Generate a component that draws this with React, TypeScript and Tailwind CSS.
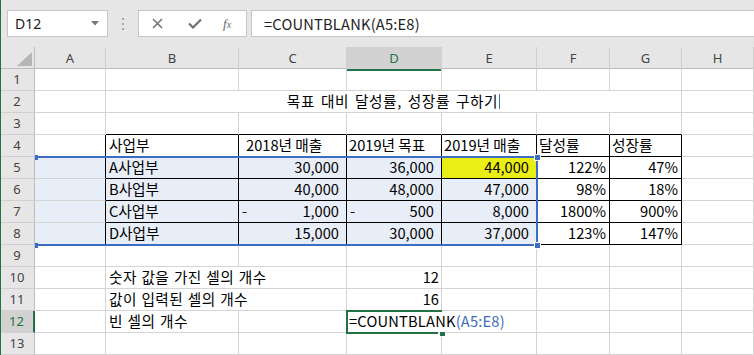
import React from "react";

const COLS = ["A", "B", "C", "D", "E", "F", "G", "H"];
const GRID = "grid grid-cols-[35px_71px_133px_108px_95px_95px_73px_72px_72px]";
const SEL = "bg-[#e8eef8]";

type Cell = {
  t?: React.ReactNode;
  span?: number;
  bg?: string;
};

// table B4:G8 gets black borders
function borderCls(r: number, c: number) {
  const right = r >= 4 && r <= 8 && c >= 1 && c <= 7 ? "border-r-black" : "border-r-[#d4d4d4]";
  const bottom = r >= 3 && r <= 8 && c >= 2 && c <= 7 ? "border-b-black" : "border-b-[#d4d4d4]";
  return `${right} ${bottom}`;
}

const acc = (v: string, dash = false) => (
  <div className="flex justify-between pl-[3px] pr-[7px]">
    <span>{dash ? "-" : ""}</span>
    <span>{v}</span>
  </div>
);
const num = (v: string, pr = "pr-[3px]") => <div className={`text-right ${pr}`}>{v}</div>;
const txt = (v: string, pl = "pl-[3px]") => <div className={pl}>{v}</div>;
const kor = (v: string) => (
  <div className="pl-[3px] whitespace-nowrap tracking-[0.4px] [word-spacing:1px]">{v}</div>
);

const dataRows: { b: string; c: string; d: string; e: string; f: string; g: string; dash?: boolean }[] = [
  { b: "A사업부", c: "30,000", d: "36,000", e: "44,000", f: "122%", g: "47%" },
  { b: "B사업부", c: "40,000", d: "48,000", e: "47,000", f: "98%", g: "18%" },
  { b: "C사업부", c: "1,000", d: "500", e: "8,000", f: "1800%", g: "900%", dash: true },
  { b: "D사업부", c: "15,000", d: "30,000", e: "37,000", f: "123%", g: "147%" },
];

function buildRow(r: number): Cell[] {
  const empty = (n: number) => Array.from({ length: n }, () => ({} as Cell));
  if (r === 2)
    return [
      {},
      {
        span: 6,
        t: (
          <div className="text-center tracking-[0.6px] [word-spacing:2px]">
            목표 대비 달성률, 성장률 구하기
            <span className="inline-block w-px h-[15px] bg-[#3b6ec2] ml-[1px] align-[-2px]" />
          </div>
        ),
      },
      {},
    ];
  if (r === 4)
    return [
      {},
      { t: txt("사업부") },
      { t: txt("2018년 매출", "pl-[7px]") },
      { t: txt("2019년 목표", "pl-[2px]") },
      { t: txt("2019년 매출", "pl-[2px]") },
      { t: txt("달성률", "pl-[2px]") },
      { t: txt("성장률", "pl-[2px]") },
      {},
    ];
  if (r >= 5 && r <= 8) {
    const d = dataRows[r - 5];
    return [
      { bg: SEL },
      { bg: SEL, t: txt(d.b) },
      { bg: SEL, t: acc(d.c, d.dash) },
      { bg: SEL, t: acc(d.d, d.dash) },
      { bg: r === 5 ? "bg-[#e9ee14]" : SEL, t: acc(d.e) },
      { t: num(d.f) },
      { t: num(d.g) },
      {},
    ];
  }
  if (r === 10 || r === 11)
    return [
      {},
      { span: 2, t: kor(r === 10 ? "숫자 값을 가진 셀의 개수" : "값이 입력된 셀의 개수") },
      { t: num(r === 10 ? "12" : "16", "pr-[2px]") },
      ...empty(4),
    ];
  if (r === 12)
    return [
      {},
      { t: kor("빈 셀의 개수") },
      {},
      {
        span: 2,
        t: (
          <div className="pl-[2px] whitespace-nowrap tracking-[0.2px]">
            =COUNTBLANK<span className="text-[#3b6ec2]">(A5:E8)</span>
          </div>
        ),
      },
      ...empty(3),
    ];
  return empty(8);
}

function FxBar() {
  return (
    <div className="h-[47px] bg-[#e6e6e6] flex items-start pt-[10px] font-['Noto_Sans',sans-serif]">
      <div className="ml-[6px] w-[101px] h-[27px] bg-white border border-[#c6c6c6] flex items-center justify-between pl-[7px] pr-[8px]">
        <span className="text-[14px] text-[#222]">D12</span>
        <svg width="8" height="5" viewBox="0 0 8 5">
          <path d="M0 0h8L4 4.5z" fill="#777" />
        </svg>
      </div>
      <div className="ml-[14px] mt-[8px] flex flex-col gap-[3px]">
        <div className="w-[2px] h-[2px] bg-[#a8a8a8]" />
        <div className="w-[2px] h-[2px] bg-[#a8a8a8]" />
        <div className="w-[2px] h-[2px] bg-[#a8a8a8]" />
      </div>
      <div className="ml-[14px] w-[109px] h-[27px] bg-white border border-[#c6c6c6] flex items-center">
        <svg className="ml-[13px]" width="11" height="11" viewBox="0 0 11 11">
          <path d="M1 1l9 9M10 1l-9 9" stroke="#707070" strokeWidth="1.5" />
        </svg>
        <svg className="ml-[25px]" width="14" height="11" viewBox="0 0 14 11">
          <path d="M1 5.5l4 4L13 1.5" stroke="#707070" strokeWidth="2.2" fill="none" />
        </svg>
        <span className="ml-[21px] text-[13px] italic text-[#666] font-['Liberation_Serif',serif]">
          f<span className="text-[10px]">x</span>
        </span>
      </div>
      <div className="ml-[4px] flex-1 h-[27px] bg-white border border-r-0 border-[#c6c6c6] flex items-center pl-[12px]">
        <span className="text-[14.67px] tracking-[0.2px] text-[#222] font-['Noto_Sans_CJK_KR',sans-serif]">
          =COUNTBLANK(A5:E8)
        </span>
      </div>
    </div>
  );
}

export default function App() {
  const rows = Array.from({ length: 13 }, (_, i) => i + 1);
  return (
    <div className="w-[754px] h-[355px] overflow-hidden bg-white border-l border-[#217346] relative">
      <FxBar />

      {/* column headers */}
      <div className={`${GRID} h-[22px] bg-[#e6e6e6] border-b border-[#bdbdbd] text-[13px] text-[#444] font-['Noto_Sans',sans-serif] -ml-px`}>
        <div className="relative border-r border-[#bdbdbd]">
          <svg className="absolute left-[17px] top-[5px]" width="15" height="14" viewBox="0 0 15 14">
            <path d="M15 0v14H0z" fill="#b5b5b5" />
          </svg>
        </div>
        {COLS.map((c) => (
          <div
            key={c}
            className={`flex items-center justify-center border-r border-[#d0d0d0] ${
              c === "D" ? "bg-[#d2d2d2] border-b-2 border-b-[#217346] text-[#217346] pt-[2px]" : ""
            }`}
          >
            {c}
          </div>
        ))}
      </div>

      {/* body */}
      <div className="relative -ml-px">
        {rows.map((r) => {
          let c = 1;
          return (
            <div key={r} className={`${GRID} h-[22px]`}>
              <div
                className={`flex items-center justify-center text-[13px] font-['Noto_Sans',sans-serif] border-b border-b-[#d0d0d0] ${
                  r === 12
                    ? "bg-[#d2d2d2] text-[#217346] border-r-2 border-r-[#217346]"
                    : "bg-[#e6e6e6] text-[#444] border-r border-r-[#bdbdbd]"
                }`}
              >
                {r}
              </div>
              {buildRow(r).map((cell, i) => {
                const span = cell.span ?? 1;
                const last = c + span - 1;
                const b = borderCls(r, last);
                c += span;
                const spanCls = span === 6 ? "col-span-6" : span === 2 ? "col-span-2" : "";
                return (
                  <div
                    key={i}
                    className={`${spanCls} border-r border-b ${b} ${cell.bg ?? ""} text-[14.67px] leading-[20px] text-black font-['Noto_Sans_CJK_KR',sans-serif] overflow-visible`}
                  >
                    {cell.t}
                  </div>
                );
              })}
            </div>
          );
        })}

        {/* range finder A5:E8 */}
        <div className="absolute left-[35px] top-[87px] w-[503px] h-[90px] border-t-2 border-r-2 border-b-2 border-[#3b6ec2] pointer-events-none" />
        <div className="absolute left-[35px] top-[86px] w-[3px] h-[5px] bg-[#3b6ec2]" />
        <div className="absolute left-[35px] top-[174px] w-[3px] h-[5px] bg-[#3b6ec2]" />
        <div className="absolute left-[535px] top-[86px] w-[5px] h-[5px] bg-[#3b6ec2] outline outline-1 outline-white" />
        <div className="absolute left-[535px] top-[174px] w-[5px] h-[5px] bg-[#3b6ec2] outline outline-1 outline-white" />

        {/* active cell D12 */}
        <div className="absolute left-[346px] top-[241px] w-[96px] h-[2px] bg-[#217346]" />
        <div className="absolute left-[346px] top-[241px] w-[2px] h-[24px] bg-[#217346]" />
        <div className="absolute left-[346px] top-[263px] w-[92px] h-[2px] bg-[#217346]" />
        <div className="absolute left-[440px] top-[263px] w-[5px] h-[4px] bg-[#217346] outline outline-1 outline-white" />
      </div>
    </div>
  );
}
